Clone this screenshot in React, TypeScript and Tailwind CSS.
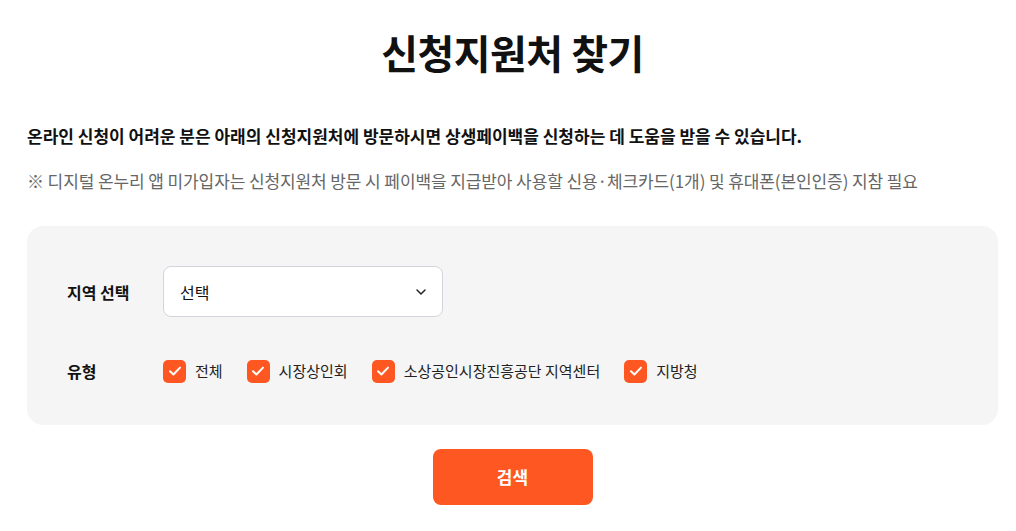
import React from "react";

const font = { fontFamily: '"Noto Sans CJK KR", "Noto Sans", sans-serif' };

function Check({ label }: { label: string }) {
  return (
    <label className="flex items-center gap-[9px]">
      <span className="flex h-[23px] w-[23px] items-center justify-center rounded-[5px] bg-[#ff5722]">
        <svg width="16" height="16" viewBox="0 0 16 16" fill="none">
          <path d="M3 8.3 L6.4 11.5 L13 4.6" stroke="white" strokeWidth="2" strokeLinecap="round" strokeLinejoin="round" />
        </svg>
      </span>
      <span className="text-[15px] text-[#222]">{label}</span>
    </label>
  );
}

export default function App() {
  return (
    <div className="min-h-[531px] w-[1016px] bg-white" style={font}>
      <div className="ml-[27px] w-[971px]">
        <h1 className="pt-[20px] text-center text-[40px] font-bold leading-[64px] tracking-[-0.5px] text-[#111]">
          신청지원처 찾기
        </h1>
        <p className="mt-[39px] text-[17px] font-bold leading-[26px] text-[#111]">
          온라인 신청이 어려운 분은 아래의 신청지원처에 방문하시면 상생페이백을 신청하는 데 도움을 받을 수 있습니다.
        </p>
        <p className="mt-[19px] text-[17px] leading-[26px] tracking-[-0.1px] text-[#666]">
          ※ 디지털 온누리 앱 미가입자는 신청지원처 방문 시 페이백을 지급받아 사용할 신용·체크카드(1개) 및 휴대폰(본인인증) 지참 필요
        </p>
        <div className="mt-[32px] rounded-[16px] bg-[#f5f5f5] px-[40px] pb-[42px] pt-[40px]">
          <div className="flex items-center">
            <span className="w-[96px] text-[16px] font-bold text-[#111]">지역 선택</span>
            <div className="flex h-[51px] w-[280px] items-center justify-between rounded-[8px] border border-[#d4d4dc] bg-white pl-[16px] pr-[14px]">
              <span className="text-[16px] text-[#111]">선택</span>
              <svg width="14" height="14" viewBox="0 0 14 14" fill="none">
                <path d="M3 5 L7 9 L11 5" stroke="#222" strokeWidth="1.5" strokeLinecap="round" strokeLinejoin="round" />
              </svg>
            </div>
          </div>
          <div className="mt-[42px] flex items-center">
            <span className="w-[96px] text-[16px] font-bold text-[#111]">유형</span>
            <div className="flex items-center gap-[24px]">
              <Check label="전체" />
              <Check label="시장상인회" />
              <Check label="소상공인시장진흥공단 지역센터" />
              <Check label="지방청" />
            </div>
          </div>
        </div>
        <div className="mt-[24px] flex justify-center">
          <button className="h-[56px] w-[160px] rounded-[8px] bg-[#ff5722] text-[17px] font-bold text-white">
            검색
          </button>
        </div>
      </div>
    </div>
  );
}
